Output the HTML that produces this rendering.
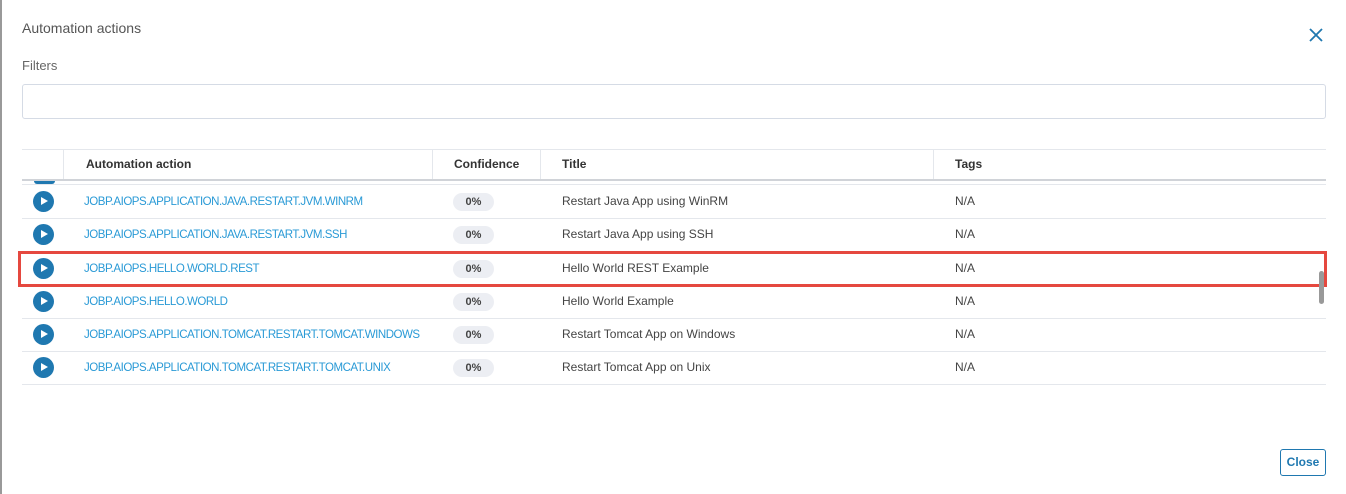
<!DOCTYPE html><html><head><style>
body{margin:0;width:1346px;height:494px;background:#fff;font-family:"Liberation Sans",sans-serif;position:relative;overflow:hidden}
.a{position:absolute}
.t{font-size:13px;color:#444}
.row{position:absolute;left:22px;width:1304px;height:33px;border-bottom:1px solid #e4e7ec}
.ic{position:absolute;left:11px;top:6px;width:21px;height:21px;border-radius:50%;background:#1f78b0}
.ic:after{content:"";position:absolute;left:8px;top:6px;border-left:7px solid #fff;border-top:4.5px solid transparent;border-bottom:4.5px solid transparent}
.lk{position:absolute;left:62px;top:9px;font-size:12px;color:#2a9ad6;letter-spacing:-0.5px;transform:scaleX(0.96);transform-origin:left}
.pill{position:absolute;left:431px;top:8px;width:41px;height:18px;border-radius:9px;background:#eceef3;font-size:11px;font-weight:bold;color:#444;text-align:center;line-height:18px}
.ti{position:absolute;left:540px;top:9px;font-size:12px;color:#444}
.tg{position:absolute;left:933px;top:9px;font-size:12px;color:#444}
.h{position:absolute;top:157px;font-size:12px;font-weight:bold;color:#333}
.vl{position:absolute;top:150px;width:1px;height:30px;background:#e4e7ec}
</style></head><body>
<div class="a" style="left:0;top:0;width:2px;height:494px;background:#999"></div>
<div class="a t" style="left:22px;top:20px;font-size:14px;color:#555">Automation actions</div>
<svg class="a" style="left:1309px;top:28px" width="14" height="14" viewBox="0 0 14 14"><path d="M1 1L13 13M13 1L1 13" stroke="#1f78b0" stroke-width="1.8"/></svg>
<div class="a t" style="left:22px;top:58px;color:#666">Filters</div>
<div class="a" style="left:22px;top:84px;width:1302px;height:33px;border:1px solid #d5dbe5;border-radius:3px"></div>
<div class="a" style="left:22px;top:149px;width:1304px;height:1px;background:#e4e7ec"></div>
<div class="vl" style="left:63px"></div><div class="vl" style="left:432px"></div><div class="vl" style="left:540px"></div><div class="vl" style="left:933px"></div>
<div class="h" style="left:86px">Automation action</div>
<div class="h" style="left:454px">Confidence</div>
<div class="h" style="left:562px">Title</div>
<div class="h" style="left:955px">Tags</div>
<div class="a" style="left:22px;top:179px;width:1304px;height:2px;background:#d0d3d8"></div>
<div class="a" style="left:34px;top:181px;width:21px;height:3px;border-radius:0 0 10px 10px;background:#1f78b0"></div>
<div class="a" style="left:22px;top:184px;width:1304px;height:1px;background:#e4e7ec"></div>
<div class="row" style="top:185px"><div class="ic"></div><div class="lk">JOBP.AIOPS.APPLICATION.JAVA.RESTART.JVM.WINRM</div><div class="pill">0%</div><div class="ti">Restart Java App using WinRM</div><div class="tg">N/A</div></div>
<div class="row" style="top:218px"><div class="ic"></div><div class="lk">JOBP.AIOPS.APPLICATION.JAVA.RESTART.JVM.SSH</div><div class="pill">0%</div><div class="ti">Restart Java App using SSH</div><div class="tg">N/A</div></div>
<div class="row" style="top:252px"><div class="ic"></div><div class="lk">JOBP.AIOPS.HELLO.WORLD.REST</div><div class="pill">0%</div><div class="ti">Hello World REST Example</div><div class="tg">N/A</div></div>
<div class="row" style="top:285px"><div class="ic"></div><div class="lk">JOBP.AIOPS.HELLO.WORLD</div><div class="pill">0%</div><div class="ti">Hello World Example</div><div class="tg">N/A</div></div>
<div class="row" style="top:318px"><div class="ic"></div><div class="lk">JOBP.AIOPS.APPLICATION.TOMCAT.RESTART.TOMCAT.WINDOWS</div><div class="pill">0%</div><div class="ti">Restart Tomcat App on Windows</div><div class="tg">N/A</div></div>
<div class="row" style="top:351px"><div class="ic"></div><div class="lk">JOBP.AIOPS.APPLICATION.TOMCAT.RESTART.TOMCAT.UNIX</div><div class="pill">0%</div><div class="ti">Restart Tomcat App on Unix</div><div class="tg">N/A</div></div>
<div class="a" style="left:18px;top:251px;width:1303px;height:30px;border:3px solid #e5483f"></div>
<div class="a" style="left:1319px;top:271px;width:5px;height:33px;border-radius:3px;background:#999"></div>
<div class="a" style="left:1280px;top:449px;width:44px;height:25px;border:1px solid #1f78b0;border-radius:3px;color:#1f78b0;font-size:12px;font-weight:bold;text-align:center;line-height:25px">Close</div>
</body></html>
